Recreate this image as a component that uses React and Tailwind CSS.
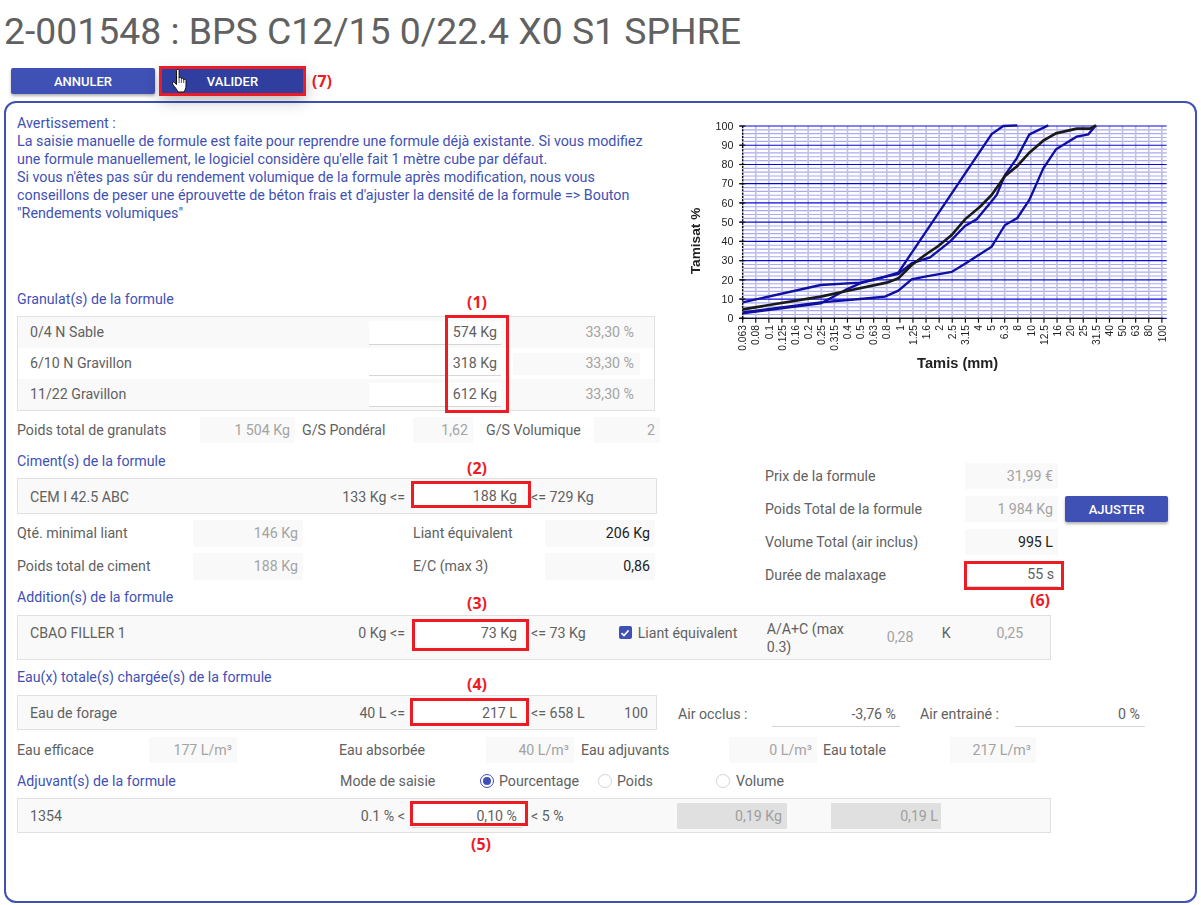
const sieves = ["0.063","0.08","0.1","0.125","0.16","0.2","0.25","0.315","0.4","0.5","0.63","0.8","1","1.25","1.6","2","2.5","3.15","4","5","6.3","8","10","12.5","16","20","25","31.5","40","50","63","80","100"];

const blueCurves = [
  "188,607 422,555 540,548 580,540 655,518 935,102 970,78 1012,76",
  "188,640 422,610 460,590 500,568 540,550 580,538 655,522 695,490 750,472 810,425 855,378 890,358 930,310 950,285 975,225 1010,175 1048,103 1105,76",
  "188,637 422,607 540,597 615,590 655,572 695,538 735,530 815,516 860,488 935,440 975,375 1012,354 1048,300 1090,205 1128,148 1165,125 1190,110 1225,103 1248,76",
];
const blackCurve = "188,628 422,590 500,573 620,548 655,535 695,495 735,465 775,438 815,405 855,358 900,320 935,285 975,228 1012,198 1048,158 1090,122 1128,100 1190,86 1230,86 1248,76";

const Chart = () => {
  const xAt = (i) => 188 + i * 39.3;
  const yAt = (pct) => 655 - pct * 5.77;
  const pcts = Array.from({ length: 51 }, (_, i) => i * 2);
  return (
    <svg width="500" height="260" viewBox="0 60 1500 780" className="block blur-[0.35px]">
      {pcts.map((p) =>
        p % 10 !== 0 ? (
          <line key={p} x1="188" x2="1460" y1={yAt(p)} y2={yAt(p)} stroke="#a9a9f6" strokeWidth="3.5" />
        ) : null
      )}
      {sieves.map((s, i) => (
        <line key={s} x1={xAt(i)} x2={xAt(i)} y1={yAt(100)} y2={655} stroke="#c2c2d8" strokeWidth="5" />
      ))}
      {pcts.map((p) =>
        p % 10 === 0 ? (
          <line key={p} x1="178" x2="1460" y1={yAt(p)} y2={yAt(p)} stroke="#0606e4" strokeWidth="3.5" />
        ) : null
      )}
      <line x1="178" x2="1450" y1="655" y2="655" stroke="#111" strokeWidth="3.5" />
      {sieves.map((s, i) => (
        <line key={s} x1={xAt(i)} x2={xAt(i)} y1="655" y2="668" stroke="#111" strokeWidth="3.5" />
      ))}
      {Array.from({ length: 11 }, (_, i) => i * 10).map((p) => (
        <line key={p} x1="178" x2="196" y1={yAt(p)} y2={yAt(p)} stroke="#111" strokeWidth="3.5" />
      ))}
      <line x1="188" x2="188" y1={yAt(100)} y2="660" stroke="#000" strokeWidth="4" strokeDasharray="6 4" />
      <g fontFamily="Liberation Sans, sans-serif" fill="#222">
        {Array.from({ length: 11 }, (_, i) => i * 10).map((p) => (
          <text key={p} x="160" y={yAt(p) + 11} fontSize="32" textAnchor="end">{p}</text>
        ))}
        {sieves.map((s, i) => (
          <text key={s} transform={`translate(${xAt(i) + 11},675) rotate(-90)`} fontSize="31" textAnchor="end">{s}</text>
        ))}
        <text x="833" y="804" fontSize="44" fontWeight="bold" textAnchor="middle">Tamis (mm)</text>
        <text transform="translate(60,423) rotate(-90)" fontSize="41" fontWeight="bold" textAnchor="middle">Tamisat %</text>
      </g>
      {blueCurves.map((c) => (
        <polyline key={c} points={c} fill="none" stroke="#1010a0" strokeWidth="7" />
      ))}
      <polyline points={blackCurve} fill="none" stroke="#1a1a1a" strokeWidth="8" />
    </svg>
  );
};

// mouse cursor caught in the screenshot
const HandCursor = ({ className }) => (
  <svg width="18" height="24" viewBox="0 0 18 24" className={className} fill="#fff" stroke="#111" strokeWidth="1">
    <path d="M5.5 1.5c0-1.4 2.6-1.4 2.6 0V9c0-1 2.2-1 2.3 0v1c0-1 2.2-1 2.3 0v1c0-.9 2.3-.9 2.3.2V17c0 2.5-1.2 4-2 6H7c-.6-2-3-4.5-5.5-8-.9-1.4.6-2.6 1.8-1.5L5.5 15.5Z" />
    <path d="M8.1 9v5M10.4 10v4M12.7 11v3" fill="none" strokeWidth="0.7" />
  </svg>
);

// small red number next to a highlighted field
const Mark = ({ className, children }) => (
  <span className={`absolute text-[16px] leading-5 font-bold text-[#ed1c24] font-['Open_Sans',sans-serif] ${className}`}>
    {children}
  </span>
);

const RedBox = ({ className }) => (
  <span className={`absolute border-[3px] border-[#ed1c24] pointer-events-none ${className}`} />
);

const Heading = ({ className = "", children }) => (
  <div className={`text-[#3f51b5] h-[18px] leading-[18px] ${className}`}>{children}</div>
);

// grey read-only value
const Value = ({ className = "", dark, children }) => (
  <div className={`h-[26px] bg-[#f9f9f9] flex items-center justify-end pr-[5px] shrink-0 ${dark ? "text-[#212121]" : "text-[#a3a3a3]"} ${className}`}>
    {children}
  </div>
);

// white editable value with an underline
const Input = ({ className = "", plain, children }) => (
  <div className={`h-[24px] bg-white flex items-center justify-end shrink-0 ${plain ? "" : "border-b border-[#d6d6d6]"} ${className}`}>
    {children}
  </div>
);

const Radio = ({ checked, className = "" }) => (
  <span className={`w-[14px] h-[14px] rounded-full border flex items-center justify-center shrink-0 ${checked ? "border-[#3f51b5]" : "border-[#d4d4d4]"} ${className}`}>
    {checked && <span className="w-[8px] h-[8px] rounded-full bg-[#3f51b5]" />}
  </span>
);

const granulats = [
  { name: "0/4 N Sable", value: "574 Kg", bg: "bg-[#f9f9f9]" },
  { name: "6/10 N Gravillon", value: "318 Kg", bg: "bg-white", boxed: true },
  { name: "11/22 Gravillon", value: "612 Kg", bg: "bg-[#f9f9f9]" },
];

const Summary = ({ label, children }) => (
  <div className="flex items-center h-[26px]">
    <div className="w-[200px] shrink-0">{label}</div>
    {children}
  </div>
);

export default function App() {
  return (
    <div className="w-[1201px] h-[905px] bg-white overflow-hidden font-['Roboto',sans-serif] text-[14.2px] leading-[21px] text-[#616161]">
      <h1 className="pl-[4px] pt-[10px] h-[66px] text-[37.33px] leading-[42px] text-[#616161]">
        2-001548 : BPS C12/15 0/22.4 X0 S1 SPHRE
      </h1>

      {/* action buttons */}
      <div className="relative z-10 flex items-center h-[30px] pl-[11px]">
        <button className="w-[144px] h-[26px] bg-[#3f51b5] text-white text-[13px] font-medium rounded-[2px] shadow-[0_2px_3px_rgba(0,0,0,0.3)]">
          ANNULER
        </button>
        <div className="relative ml-[5px]">
          <button className="w-[145px] h-[26px] bg-[#303f9f] text-white text-[13px] font-medium rounded-[2px] shadow-[0_6px_16px_rgba(0,0,0,0.3)]">
            VALIDER
          </button>
          <RedBox className="-left-[1px] -right-[1px] -top-[2px] -bottom-[2px]" />
          <HandCursor className="absolute left-[11px] top-[1px]" />
        </div>
        <span className="ml-[7px] text-[16px] font-bold text-[#ed1c24] font-['Open_Sans',sans-serif]">(7)</span>
      </div>

      <div className="mt-[5px] mx-[4px] w-[1193px] h-[802px] border-2 border-[#3f51b5] rounded-[12px] pl-[11px] pt-[11px]">
        <div className="flex">
          {/* left column */}
          <div className="w-[643px] shrink-0">
            <div className="h-[176px] text-[#3f51b5] text-[14.3px] leading-[18px] whitespace-nowrap">
              Avertissement :<br />
              La saisie manuelle de formule est faite pour reprendre une formule déjà existante. Si vous modifiez<br />
              une formule manuellement, le logiciel considère qu'elle fait 1 mètre cube par défaut.<br />
              Si vous n'êtes pas sûr du rendement volumique de la formule après modification, nous vous<br />
              conseillons de peser une éprouvette de béton frais et d'ajuster la densité de la formule =&gt; Bouton<br />
              "Rendements volumiques"
            </div>

            <Heading>Granulat(s) de la formule</Heading>
            <div className="relative mt-[8px] w-[638px] border border-[#e0e0e0]">
              {granulats.map((g) => (
                <div key={g.name} className={`flex items-center h-[31px] ${g.bg}`}>
                  <div className="w-[351px] pl-[12px] shrink-0">{g.name}</div>
                  <Input className="w-[132px] pr-[4px]">{g.value}</Input>
                  <div className={`ml-[12px] w-[127px] h-[22px] flex items-center justify-end pr-[6px] text-[#a3a3a3] ${g.boxed ? "bg-[#f9f9f9]" : ""}`}>
                    33,30 %
                  </div>
                </div>
              ))}
              <RedBox className="left-[427px] w-[64px] -top-[2px] -bottom-[3px]" />
              <Mark className="left-[449px] -top-[25px]">(1)</Mark>
            </div>

            <div className="flex items-center mt-[6px]">
              <div className="w-[183px] shrink-0">Poids total de granulats</div>
              <Value className="w-[95px]">1 504 Kg</Value>
              <div className="w-[111px] ml-[7px] shrink-0">G/S Pondéral</div>
              <Value className="w-[60px]">1,62</Value>
              <div className="w-[108px] ml-[13px] shrink-0">G/S Volumique</div>
              <Value className="w-[66px]">2</Value>
            </div>

            <Heading className="mt-[9px]">Ciment(s) de la formule</Heading>
            <div className="relative mt-[8px] w-[640px] h-[36px] border border-[#e0e0e0] bg-[#f9f9f9] flex items-center">
              <div className="w-[388px] pl-[12px] pr-[1px] pt-[2px] flex justify-between shrink-0">
                <span>CEM I 42.5 ABC</span>
                <span>133 Kg &lt;=</span>
              </div>
              <div className="relative ml-[6px]">
                <Input className="w-[110px] pr-[5px] pt-[2px]">188 Kg</Input>
                <RedBox className="-left-[1px] -right-[9px] -top-[3px] bottom-0" />
              </div>
              <span className="ml-[9px] pt-[2px]">&lt;= 729 Kg</span>
              <Mark className="left-[449px] -top-[21px]">(2)</Mark>
            </div>

            <div className="flex items-center mt-[6px]">
              <div className="w-[176px] shrink-0">Qté. minimal liant</div>
              <Value className="w-[110px] h-[27px]">146 Kg</Value>
              <div className="w-[132px] ml-[110px] shrink-0">Liant équivalent</div>
              <Value dark className="w-[110px] h-[27px]">206 Kg</Value>
            </div>
            <div className="flex items-center mt-[6px]">
              <div className="w-[176px] shrink-0">Poids total de ciment</div>
              <Value className="w-[110px] h-[27px]">188 Kg</Value>
              <div className="w-[132px] ml-[110px] shrink-0">E/C (max 3)</div>
              <Value dark className="w-[110px] h-[27px]">0,86</Value>
            </div>
          </div>

          {/* right column */}
          <div className="ml-[20px] w-[500px]">
            <div className="mt-[6px]">
              <Chart />
            </div>
            <div className="mt-[83px] ml-[85px] flex flex-col gap-[7px]">
              <Summary label="Prix de la formule">
                <Value className="w-[93px]">31,99 €</Value>
              </Summary>
              <Summary label="Poids Total de la formule">
                <Value className="w-[93px]">1 984 Kg</Value>
                <button className="ml-[7px] w-[103px] h-[26px] bg-[#3f51b5] text-white text-[13px] font-medium rounded-[2px] shadow-[0_2px_3px_rgba(0,0,0,0.3)]">
                  AJUSTER
                </button>
              </Summary>
              <Summary label="Volume Total (air inclus)">
                <Value dark className="w-[93px]">995 L</Value>
              </Summary>
              <Summary label="Durée de malaxage">
                <div className="relative">
                  <Input className="w-[93px] pr-[4px]">55 s</Input>
                  <RedBox className="-left-[1px] -right-[6px] -top-[2px] -bottom-[3px]" />
                  <Mark className="left-[65px] top-[27px]">(6)</Mark>
                </div>
              </Summary>
            </div>
          </div>
        </div>

        <Heading>Addition(s) de la formule</Heading>
        <div className="relative mt-[9px] w-[1034px] h-[45px] border border-[#e0e0e0] bg-[#f9f9f9] flex items-start">
          <div className="w-[388px] h-[34px] pl-[12px] pr-[1px] flex items-center justify-between shrink-0">
            <span>CBAO FILLER 1</span>
            <span>0 Kg &lt;=</span>
          </div>
          <div className="relative ml-[6px] mt-[5px]">
            <Input plain className="w-[110px] pr-[5px]">73 Kg</Input>
            <RedBox className="left-0 -right-[7px] -top-[2px] -bottom-[6px]" />
          </div>
          <span className="ml-[9px] h-[34px] flex items-center">&lt;= 73 Kg</span>
          <span className="ml-[33px] mt-[10px] w-[13px] h-[13px] rounded-[2px] bg-[#3f51b5] flex items-center justify-center shrink-0">
            <svg width="10" height="10" viewBox="0 0 10 10" fill="none" stroke="#fff" strokeWidth="1.6">
              <path d="M1.5 5.2 4 7.6 8.6 2.4" />
            </svg>
          </span>
          <span className="ml-[6px] h-[34px] flex items-center w-[129px] shrink-0">Liant équivalent</span>
          <div className="mt-[4px] w-[120px] leading-[18px] shrink-0">A/A+C (max<br />0.3)</div>
          <span className="mt-[11px] w-[26px] text-right text-[#a3a3a3] shrink-0">0,28</span>
          <span className="ml-[29px] h-[34px] flex items-center">K</span>
          <span className="ml-[46px] h-[34px] flex items-center text-[#a3a3a3]">0,25</span>
          <Mark className="left-[449px] -top-[23px]">(3)</Mark>
        </div>

        <Heading className="mt-[8px]">Eau(x) totale(s) chargée(s) de la formule</Heading>
        <div className="flex items-center mt-[9px]">
          <div className="relative w-[640px] h-[35px] border border-[#e0e0e0] bg-[#f9f9f9] flex items-center shrink-0">
            <div className="w-[388px] pl-[12px] pr-[1px] pt-[2px] flex justify-between shrink-0">
              <span>Eau de forage</span>
              <span>40 L &lt;=</span>
            </div>
            <div className="relative ml-[6px]">
              <Input plain className="w-[110px] pr-[5px] pt-[2px]">217 L</Input>
              <RedBox className="-left-[2px] -right-[7px] -top-[3px] -bottom-[1px]" />
            </div>
            <span className="ml-[9px] pt-[2px]">&lt;= 658 L</span>
            <span className="ml-auto pr-[8px] pt-[2px]">100</span>
            <Mark className="left-[449px] -top-[22px]">(4)</Mark>
          </div>
          <span className="ml-[21px] mt-[4px] w-[94px] shrink-0">Air occlus :</span>
          <Input className="w-[128px] pr-[4px] h-[26px] mt-[2px] pt-[2px]">-3,76 %</Input>
          <span className="ml-[20px] mt-[4px] w-[95px] shrink-0">Air entrainé :</span>
          <Input className="w-[130px] pr-[5px] h-[26px] mt-[2px] pt-[2px]">0 %</Input>
        </div>

        <div className="flex items-center mt-[7px]">
          <div className="w-[132px] shrink-0">Eau efficace</div>
          <Value className="w-[88px]">177 L/m³</Value>
          <div className="w-[147px] ml-[102px] shrink-0">Eau absorbée</div>
          <Value className="w-[88px]">40 L/m³</Value>
          <div className="w-[148px] ml-[7px] shrink-0">Eau adjuvants</div>
          <Value className="w-[88px]">0 L/m³</Value>
          <div className="w-[127px] ml-[6px] shrink-0">Eau totale</div>
          <Value className="w-[86px]">217 L/m³</Value>
        </div>

        <div className="flex items-center mt-[9px] h-[18px]">
          <div className="w-[323px] text-[#3f51b5] shrink-0">Adjuvant(s) de la formule</div>
          <div className="w-[140px] shrink-0">Mode de saisie</div>
          <Radio checked />
          <span className="ml-[5px] w-[99px] shrink-0">Pourcentage</span>
          <Radio />
          <span className="ml-[5px] w-[99px] shrink-0">Poids</span>
          <Radio />
          <span className="ml-[6px]">Volume</span>
        </div>
        <div className="relative mt-[8px] w-[1034px] h-[35px] border border-[#e0e0e0] bg-[#f9f9f9] flex items-center">
          <div className="w-[388px] pl-[12px] pr-[1px] pt-[2px] flex justify-between shrink-0">
            <span>1354</span>
            <span>0.1 % &lt;</span>
          </div>
          <div className="relative ml-[6px]">
            <Input className="w-[110px] pr-[5px] pt-[2px]">0,10 %</Input>
            <RedBox className="-left-[2px] -right-[6px] -top-[3px] bottom-[2px]" />
          </div>
          <span className="ml-[9px] w-[146px] pt-[2px] shrink-0">&lt; 5 %</span>
          <div className="w-[110px] h-[26px] bg-[#e0e0e0] text-[#9e9e9e] flex items-center justify-end pr-[5px] pt-[2px] shrink-0">0,19 Kg</div>
          <div className="ml-[44px] w-[110px] h-[26px] bg-[#e0e0e0] text-[#9e9e9e] flex items-center justify-end pr-[3px] pt-[2px] shrink-0">0,19 L</div>
          <Mark className="left-[453px] top-[35px]">(5)</Mark>
        </div>
      </div>
    </div>
  );
}
